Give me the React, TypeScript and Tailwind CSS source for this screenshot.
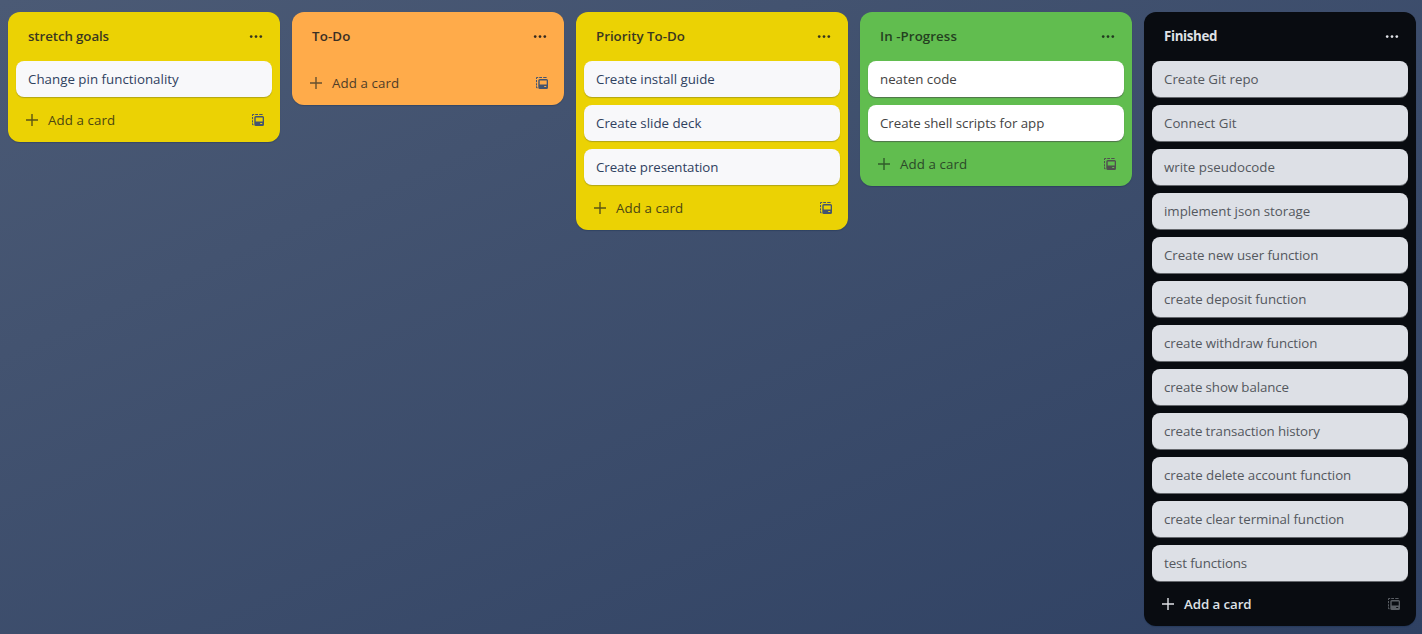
type Tone = {
  list: string;
  title: string;
  dots: string;
  card: string;
  add: string;
  plus: string;
  icon: string;
};

type List = { name: string; spacing: string; tone: Tone; cards: { text: string; spacing?: string }[] };

const yellow: Tone = {
  list: 'bg-[#ebd204]',
  title: 'text-[#3a3820] font-semibold',
  dots: 'text-[#35341f]',
  card: 'bg-[#f8f8fa] text-[#2f4160] shadow-[0_1px_1px_rgba(9,30,66,0.25)]',
  add: 'text-[#4c4712] tracking-[0.1px]',
  plus: 'text-[#5c5514]',
  icon: 'text-[#44546f]',
};

const orange: Tone = {
  ...yellow,
  list: 'bg-[#ffab4a]',
  title: 'text-[#3a2f24] font-semibold',
  dots: 'text-[#33291f]',
  add: 'text-[#4f3d28] tracking-[0.1px]',
  plus: 'text-[#67502f]',
};

const green: Tone = {
  list: 'bg-[#61bd4f]',
  title: 'text-[#24401f] font-semibold',
  dots: 'text-[#21391f]',
  card: 'bg-white text-[#434343] shadow-[0_1px_1px_rgba(60,40,70,0.5)]',
  add: 'text-[#2c4a29] tracking-[0.1px]',
  plus: 'text-[#305b2a]',
  icon: 'text-[#50504f]',
};

const black: Tone = {
  list: 'bg-[#090c11]',
  title: 'text-[#dfe1e6] font-bold',
  dots: 'text-[#dfe1e6]',
  card: 'bg-[#dde0e6] text-[#54585e] shadow-[0_1px_0_#65686d]',
  add: 'text-[#dfe1e6] font-semibold tracking-[-0.08px]',
  plus: 'text-[#dfe1e6]',
  icon: 'text-[#5a5e64]',
};

const snug = 'tracking-[-0.07px]';

const lists: List[] = [
  {
    name: 'stretch goals',
    spacing: 'tracking-[-0.1px]',
    tone: yellow,
    cards: [{ text: 'Change pin functionality', spacing: 'tracking-[0.02px]' }],
  },
  { name: 'To-Do', spacing: 'tracking-[0.15px]', tone: orange, cards: [] },
  {
    name: 'Priority To-Do',
    spacing: '',
    tone: yellow,
    cards: [
      { text: 'Create install guide' },
      { text: 'Create slide deck' },
      { text: 'Create presentation', spacing: snug },
    ],
  },
  {
    name: 'In -Progress',
    spacing: 'tracking-[0.08px]',
    tone: green,
    cards: [{ text: 'neaten code' }, { text: 'Create shell scripts for app', spacing: 'tracking-[-0.05px]' }],
  },
  {
    name: 'Finished',
    spacing: 'tracking-[-0.35px]',
    tone: black,
    cards: [
      { text: 'Create Git repo' },
      { text: 'Connect Git' },
      { text: 'write pseudocode' },
      { text: 'implement json storage', spacing: 'tracking-[-0.02px]' },
      { text: 'Create new user function', spacing: snug },
      { text: 'create deposit function', spacing: 'tracking-[-0.04px]' },
      { text: 'create withdraw function', spacing: snug },
      { text: 'create show balance', spacing: 'tracking-[-0.1px]' },
      { text: 'create transaction history', spacing: 'tracking-[-0.1px]' },
      { text: 'create delete account function', spacing: 'tracking-[-0.04px]' },
      { text: 'create clear terminal function', spacing: 'tracking-[-0.09px]' },
      { text: 'test functions', spacing: 'tracking-[-0.1px]' },
    ],
  },
];

function DotsIcon({ className }: { className: string }) {
  return (
    <svg className={className} width="16" height="16" viewBox="0 0 16 16" fill="currentColor">
      <circle cx="3.2" cy="7.6" r="1.35" />
      <circle cx="8" cy="7.6" r="1.35" />
      <circle cx="12.8" cy="7.6" r="1.35" />
    </svg>
  );
}

function PlusIcon({ className }: { className: string }) {
  return (
    <svg className={className} width="16" height="16" viewBox="0 0 16 16" fill="none" stroke="currentColor" strokeWidth="1.4">
      <path d="M8 2v12M2 8h12" />
    </svg>
  );
}

function TemplateIcon({ className }: { className: string }) {
  return (
    <svg className={className} width="16" height="16" viewBox="0 0 16 16" fill="currentColor">
      <path d="M2 4V3a1 1 0 0 1 1-1h1.200v1H3v1zM5.200 2h2.800v1H5.200zM9.200 2H12a1 1 0 0 1 .8 1H9.200zM2 5h1v2.200H2zM2 8.200h1v2.200H2zM2 11.300h1v.9h.6v1H3a1 1 0 0 1-1-1z" />
      <path
        fillRule="evenodd"
        d="M5.800 4h6.700A1.500 1.500 0 0 1 14 5.500v7a1.500 1.500 0 0 1-1.500 1.500H5.800a1.500 1.500 0 0 1-1.500-1.500v-7A1.500 1.500 0 0 1 5.800 4zm-.1 1.400v4.200h7V5.400zM10.200 11v1h2v-1z"
      />
    </svg>
  );
}

function ListColumn({ list }: { list: List }) {
  const { tone } = list;
  return (
    <section className={`flex w-[272px] shrink-0 flex-col rounded-xl px-2 shadow-[0_1px_1px_rgba(9,30,66,0.25)] ${tone.list}`}>
      <header className="flex h-[49px] items-center justify-between pr-2 pl-3">
        <h2 className={`pb-[2px] text-[13.3px] leading-5 ${list.spacing} ${tone.title}`}>{list.name}</h2>
        <DotsIcon className={tone.dots} />
      </header>
      {list.cards.length > 0 && (
        <ol className="mb-px flex flex-col gap-2">
          {list.cards.map((card) => (
            <li
              key={card.text}
              className={`flex h-9 items-center rounded-lg px-3 text-[13.3px] leading-5 ${card.spacing ?? ''} ${tone.card}`}
            >
              {card.text}
            </li>
          ))}
        </ol>
      )}
      <footer className="flex h-11 items-center pr-1.5 pl-2">
        <PlusIcon className={tone.plus} />
        <span className={`ml-2 grow text-[13.3px] leading-5 ${tone.add}`}>Add a card</span>
        <TemplateIcon className={tone.icon} />
      </footer>
    </section>
  );
}

export default function App() {
  return (
    <main className="flex h-[634px] w-[1422px] items-start gap-3 overflow-hidden bg-linear-to-br from-[#4b5a75] to-[#2f4163] px-2 pt-3 font-['Open_Sans',sans-serif]">
      {lists.map((list) => (
        <ListColumn key={list.name} list={list} />
      ))}
    </main>
  );
}
